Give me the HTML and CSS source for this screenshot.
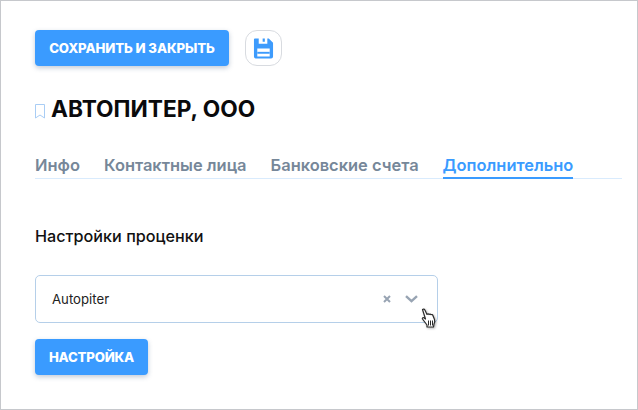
FILE: index.html
```html
<!DOCTYPE html>
<html lang="ru">
<head>
<meta charset="utf-8">
<title>АВТОПИТЕР, ООО</title>
<link rel="stylesheet" href="styles.css">
</head>
<body>
<div class="frame">
  <div class="actions">
    <button class="btn btn-save">СОХРАНИТЬ И ЗАКРЫТЬ</button>
    <button class="icon-btn" aria-label="Сохранить">
      <svg width="21" height="21" viewBox="0 0 22 22">
        <path fill="#3d9bfc" fill-rule="evenodd" d="M2 0.500h14.500L21 5v14.500a2 2 0 0 1-2 2H3a2 2 0 0 1-2-2V1.500a1 1 0 0 1 1-1zM6 0.500v5.500h9V0.500h-2.600v3.500h-2.300V0.500zM4.500 11v8.500h13V11z"/>
        <path fill="#3d9bfc" d="M4.500 14.500h13v2h-13z"/>
      </svg>
    </button>
  </div>
  <div class="title-row">
    <svg class="bookmark" width="10" height="15" viewBox="0 0 10 15"><path fill="none" stroke="#a9cdf5" d="M.5.5h9v13.500L5 11 .5 14z"/></svg>
    <h1 class="title">АВТОПИТЕР, ООО</h1>
  </div>
  <nav class="tabs">
    <a class="tab">Инфо</a>
    <a class="tab">Контактные лица</a>
    <a class="tab">Банковские счета</a>
    <a class="tab tab-active">Дополнительно</a>
  </nav>
  <div class="section-label">Настройки проценки</div>
  <div class="select">
    <span class="select-value">Autopiter</span>
    <svg class="clear" width="8" height="8" viewBox="0 0 8 8"><path stroke="#98a4b3" stroke-width="2" d="M1 1l6 6M7 1L1 7"/></svg>
    <svg class="chevron" width="13" height="8" viewBox="0 0 13 8"><path fill="none" stroke="#98a4b3" stroke-width="2.400" d="M1 1.200l5.500 5 5.500-5"/></svg>
    <svg class="cursor" width="18" height="22" viewBox="0 0 18 22">
      <path fill="#fff" stroke="#2b2b2b" stroke-width="1.200" stroke-linejoin="round" d="M2.500 1.500c1-.8 2-.3 2.500.7l2 4.300c.5-.8 1.500-.8 2 0 .5-.6 1.500-.6 2 .2.600-.4 1.500-.2 1.800.5l1.700 4.300c.5 1.500.2 3-.5 4.500l-.5 3H7v-2L2.500 11c-.5-.8.300-1.800 1.300-1.300l1.700 1.300z"/>
      <path stroke="#2b2b2b" stroke-width="1" d="M8.500 12.500v5M10.500 12.500v5M12.500 12.500v5"/>
    </svg>
  </div>
  <button class="btn btn-config">НАСТРОЙКА</button>
</div>
</body>
</html>
```
FILE: styles.css
```css
* { box-sizing: border-box; }
html, body { margin: 0; padding: 0; background: #fff; }
body { width: 638px; height: 410px; overflow: hidden; font-family: "Inter", "Liberation Sans", sans-serif; }
.frame {
  width: 638px; height: 410px;
  border: 1px solid #c6c8cc;
  padding: 29px 15px 0 34px;
  display: flex; flex-direction: column; align-items: flex-start;
}
.actions { display: flex; gap: 16px; align-items: stretch; height: 36px; }
.btn {
  border: 0; border-radius: 4px; background: #3a9bff; color: #fff;
  font: 800 13.200px/36px "Inter", "Liberation Sans", sans-serif;
  height: 36px; padding: 0; text-align: center;
  box-shadow: 0 2px 5px rgba(40, 70, 110, .28);
}
.btn-save { width: 194px; letter-spacing: -.1px; }
.icon-btn {
  width: 37px; height: 36px; padding: 0; background: #fff;
  border: 1px solid #d8dbe0; border-radius: 12px;
  display: flex; align-items: center; justify-content: center;
}
.title-row { display: flex; align-items: center; gap: 6px; margin-top: 28px; height: 30px; }
.bookmark { margin-top: 4px; }
.title { margin: 0; font-size: 22.700px; line-height: 30px; font-weight: 700; color: #0a0a0c; }
.tabs {
  display: flex; gap: 24px; margin-top: 24px; width: 587px; height: 31px;
  border-bottom: 1px solid #d9ebfd;
}
.tab {
  font-size: 16.450px; line-height: 26px; height: 31px; padding-top: 4px; font-weight: 600;
  color: #768799; white-space: nowrap;
}
.tab-active { color: #3a9bff; border-bottom: 2px solid #3a9bff; }
.section-label { margin-top: 47px; font-size: 16.200px; line-height: 20px; font-weight: 500; color: #111; }
.select {
  position: relative; margin-top: 29px; width: 403px; height: 48px;
  border: 1px solid #b5cfe9; border-radius: 5px;
  display: flex; align-items: center; padding: 0 19px 0 16px;
}
.select-value { flex: 1; font-size: 13.200px; color: #222; }
.clear { margin-right: 14px; }
.cursor { position: absolute; right: -1px; bottom: -8px; filter: drop-shadow(1px 1px 1px rgba(0, 0, 0, .3)); }
.btn-config { width: 113px; margin-top: 16px; letter-spacing: -.2px; }
```
